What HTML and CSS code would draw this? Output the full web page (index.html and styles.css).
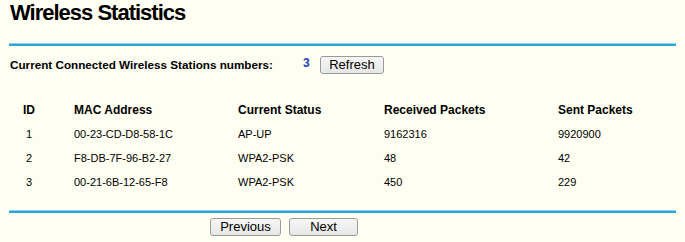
FILE: index.html
```html
<!DOCTYPE html>
<html lang="en">
<head>
    <meta charset="UTF-8">
    <title>Wireless Statistics</title>
    <link rel="stylesheet" href="styles.css">
</head>
<body>

    <h1 class="page-title">Wireless Statistics</h1>
    <div class="rule"></div>

    <div class="station-count">
        <span class="count-label">Current Connected Wireless Stations numbers:</span>
        <span class="count-value">3</span>
        <button class="btn btn-refresh">Refresh</button>
    </div>

    <table class="stats-table">
        <thead>
            <tr>
                <th class="col-id">ID</th>
                <th class="col-mac">MAC Address</th>
                <th class="col-status">Current Status</th>
                <th class="col-rx">Received Packets</th>
                <th class="col-tx">Sent Packets</th>
            </tr>
        </thead>
        <tbody>
            <tr>
                <td class="col-id">1</td>
                <td>00-23-CD-D8-58-1C</td>
                <td>AP-UP</td>
                <td>9162316</td>
                <td>9920900</td>
            </tr>
            <tr>
                <td class="col-id">2</td>
                <td>F8-DB-7F-96-B2-27</td>
                <td>WPA2-PSK</td>
                <td>48</td>
                <td>42</td>
            </tr>
            <tr>
                <td class="col-id">3</td>
                <td>00-21-6B-12-65-F8</td>
                <td>WPA2-PSK</td>
                <td>450</td>
                <td>229</td>
            </tr>
        </tbody>
    </table>

    <div class="rule rule-bottom"></div>

    <div class="pager">
        <button class="btn btn-prev">Previous</button>
        <button class="btn btn-next">Next</button>
    </div>

</body>
</html>
```

FILE: styles.css
```css
:root {
    --page-bg: #fefef2;
    --rule-top: #8fd2ee;
    --rule-main: #2aa5d6;
    --text: #000;
    --count-blue: #1a3fb0;
    --btn-bg: #f0f0f0;
    --btn-border: #9a9a9a;
}

body {
    margin: 0;
    background: var(--page-bg);
    color: var(--text);
    font-family: "Liberation Sans", Arial, sans-serif;
    font-size: 12px;
    overflow: hidden;
}

.page-title {
    margin: 0;
    padding: 0 0 0 10px;
    height: 43px;
    box-sizing: border-box;
    font-size: 22px;
    font-weight: 700;
    letter-spacing: -1px;
    line-height: 26px;
}

/* blue divider lines */
.rule {
    margin-left: 9px;
    width: 667px;
    height: 2px;
    background: var(--rule-main);
    border-top: 1px solid var(--rule-top);
}

.station-count {
    display: flex;
    align-items: center;
    height: 25px;
    margin-top: 6px;
    padding-left: 10px;
}

.count-label {
    font-weight: 700;
    font-size: 11.7px;
    width: 293px;
}

.count-value {
    color: var(--count-blue);
    font-weight: 700;
    font-size: 12px;
    width: 17px;
    margin-top: -3px;
}

.btn {
    font-family: "Liberation Sans", Arial, sans-serif;
    font-size: 13px;
    color: #000;
    background: linear-gradient(#f7f7f7, #e6e6e6);
    border: 1px solid var(--btn-border);
    border-radius: 3px;
    height: 18px;
    padding: 0;
    line-height: 16px;
}

.btn-refresh {
    width: 64px;
    margin-top: 1px;
}

.stats-table {
    border-collapse: collapse;
    margin-top: 21px;
    margin-left: 10px;
}

.stats-table th,
.stats-table td {
    padding: 0;
    height: 24px;
    text-align: left;
    white-space: nowrap;
}

.stats-table th {
    font-size: 12px;
    font-weight: 700;
}

.stats-table td {
    font-size: 11px;
}

.stats-table .col-id {
    width: 64px;
    padding-left: 16px;
    box-sizing: border-box;
}

.stats-table th.col-id {
    padding-left: 13px;
}

.stats-table .col-mac { width: 164px; }
.stats-table .col-status { width: 146px; }
.stats-table .col-rx { width: 174px; }
.stats-table .col-tx { width: 120px; }

.rule-bottom {
    margin-top: 16px;
}

.pager {
    display: flex;
    gap: 8px;
    padding-left: 210px;
    margin-top: 5px;
}

.btn-prev { width: 71px; }
.btn-next { width: 69px; }
```
